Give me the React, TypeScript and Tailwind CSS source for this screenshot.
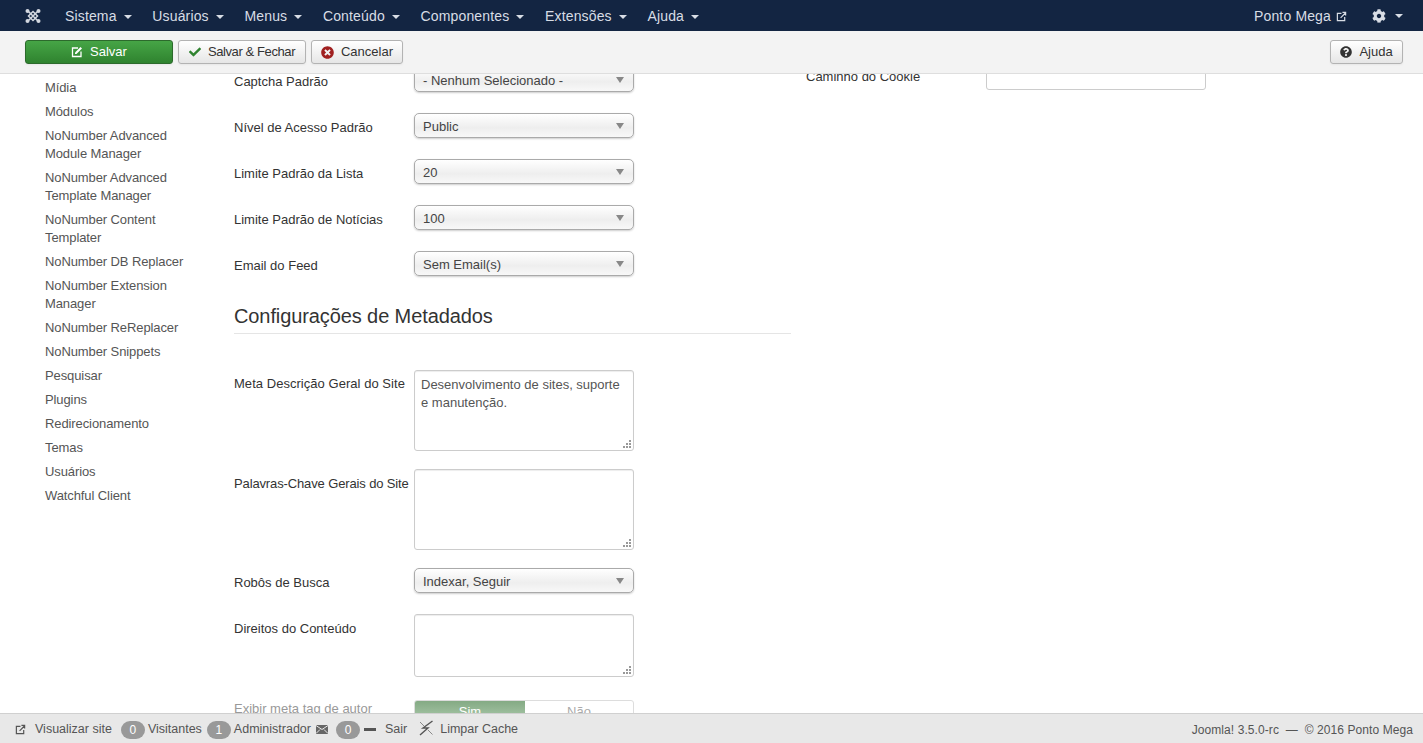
import type { ReactNode } from "react";
import { FaCheck, FaCog, FaQuestionCircle, FaTimesCircle } from "react-icons/fa";

const NAV_ITEMS = ["Sistema", "Usuários", "Menus", "Conteúdo", "Componentes", "Extensões", "Ajuda"];

const SIDEBAR_ITEMS = [
  ["Mídia"],
  ["Módulos"],
  ["NoNumber Advanced", "Module Manager"],
  ["NoNumber Advanced", "Template Manager"],
  ["NoNumber Content", "Templater"],
  ["NoNumber DB Replacer"],
  ["NoNumber Extension", "Manager"],
  ["NoNumber ReReplacer"],
  ["NoNumber Snippets"],
  ["Pesquisar"],
  ["Plugins"],
  ["Redirecionamento"],
  ["Temas"],
  ["Usuários"],
  ["Watchful Client"],
];

function JoomlaLogo() {
  return (
    <svg viewBox="0 0 16 16" className="h-4 w-4" aria-hidden>
      <g fill="none" stroke="#d3d8e0" strokeWidth="1.5">
        <path d="M3 3 13 13M13 3 3 13" />
        <path d="M8 3.500 12.500 8 8 12.500 3.500 8z" />
      </g>
      <circle cx="2.500" cy="3" r="2" fill="#d3d8e0" />
      <circle cx="13.500" cy="3" r="2" fill="#d3d8e0" />
      <circle cx="2.500" cy="13" r="2" fill="#d3d8e0" />
      <circle cx="13.500" cy="13" r="2" fill="#d3d8e0" />
    </svg>
  );
}

function NewTabIcon({ className }: { className: string }) {
  return (
    <svg viewBox="0 0 12 12" className={className} aria-hidden>
      <path
        fill="none"
        stroke="currentColor"
        strokeWidth="1.3"
        d="M6 2.500H1.500v8h8V6.500M5 7.500 10 2.500M7 1.500h3.500V5"
      />
    </svg>
  );
}

function EditIcon() {
  return (
    <svg viewBox="0 0 12 12" className="h-3 w-3" aria-hidden>
      <path fill="none" stroke="currentColor" strokeWidth="1.3" d="M7 2H1.500v8.500H10V5.500" />
      <path fill="currentColor" d="M4 6.500 9.500 1 11 2.500 5.500 8H4z" />
    </svg>
  );
}

function Caret({ className = "ml-[7px]" }: { className?: string }) {
  return <span className={`inline-block border-x-4 border-t-4 border-x-transparent border-t-current align-middle ${className}`} />;
}

function SelectBox({ value }: { value: string }) {
  return (
    <div className="flex h-[25px] w-[220px] shrink-0 items-center justify-between rounded-[5px] border border-[#aaa] bg-gradient-to-b from-white via-[#eeeeee] via-60% to-[#f8f8f8] pl-2 pr-[9px] pt-[2px] text-[#444] shadow-[0_1px_2px_rgba(0,0,0,0.2)]">
      <span>{value}</span>
      <span className="-mt-[2px] border-x-[4px] border-t-[6px] border-x-transparent border-t-[#888]" />
    </div>
  );
}

function FormRow({
  label,
  children,
  className,
  labelClass = "pt-[6px]",
}: {
  label: string;
  children: ReactNode;
  className?: string;
  labelClass?: string;
}) {
  return (
    <div className={`flex ${className ?? ""}`}>
      <label className={`w-[180px] shrink-0 leading-[18px] text-[#333] ${labelClass}`}>{label}</label>
      {children}
    </div>
  );
}

function TextArea({ value, className }: { value?: string; className: string }) {
  return (
    <div className={`relative w-[220px] shrink-0 rounded-[3px] border border-[#ccc] px-[6px] pb-1 pt-[5px] leading-[18px] text-[#555] shadow-[inset_0_1px_1px_rgba(0,0,0,0.075)] ${className}`}>
      {value}
      <svg viewBox="0 0 8 8" className="absolute bottom-[2px] right-[2px] h-2 w-2" aria-hidden>
        <path fill="#999" d="M6 0h2v2H6zM3 3h2v2H3zM6 3h2v2H6zM0 6h2v2H0zM3 6h2v2H3zM6 6h2v2H6z" />
      </svg>
    </div>
  );
}

function ToolbarButton({ children, className }: { children: ReactNode; className: string }) {
  return (
    <button className={`flex h-6 items-center justify-center gap-[7px] rounded-[3px] border border-[#b3b3b3] bg-gradient-to-b from-white to-[#e6e6e6] text-[#333] shadow-[0_1px_2px_rgba(0,0,0,0.05)] ${className}`}>
      {children}
    </button>
  );
}

function CountBadge({ value }: { value: string }) {
  return (
    <span className="flex h-[18px] w-[24px] items-center justify-center rounded-full bg-[#999] text-[12px] font-normal text-white">
      {value}
    </span>
  );
}

export default function App() {
  return (
    <div className="flex h-[743px] flex-col overflow-hidden bg-white font-['Liberation_Sans',Arial,sans-serif] text-[13px]">
      <header className="flex h-[31px] shrink-0 items-center justify-between bg-[#132542] pl-[25px] pr-5 text-[14px] tracking-[0.15px] text-[#d8dde5]">
        <div className="flex items-center">
          <JoomlaLogo />
          <nav className="ml-6 flex items-center gap-[20.7px] pt-px">
            {NAV_ITEMS.map((item) => (
              <span key={item}>
                {item}
                <Caret />
              </span>
            ))}
          </nav>
        </div>
        <div className="flex items-center pt-px">
          <span>Ponto Mega</span>
          <NewTabIcon className="ml-[5px] h-[11px] w-[11px]" />
          <FaCog className="ml-[25px] h-[14px] w-[14px]" />
          <Caret className="ml-[9px]" />
        </div>
      </header>

      <div className="flex h-[43px] shrink-0 items-center justify-between border-b border-[#dedede] bg-[#f3f3f3] pl-[25px] pr-5">
        <div className="flex gap-[5px]">
          <button className="flex h-6 w-[148px] items-center justify-center gap-[7px] rounded-[3px] border border-[#2c6a2c] bg-gradient-to-b from-[#46a546] to-[#2f832f] text-white shadow-[0_1px_2px_rgba(0,0,0,0.05)]">
            <EditIcon />
            <span>Salvar</span>
          </button>
          <ToolbarButton className="w-[128px]">
            <FaCheck className="h-3 w-3 text-[#2f832f]" />
            <span className="tracking-[-0.4px]">Salvar &amp; Fechar</span>
          </ToolbarButton>
          <ToolbarButton className="w-[92px]">
            <FaTimesCircle className="h-[13px] w-[13px] text-[#a02020]" />
            <span>Cancelar</span>
          </ToolbarButton>
        </div>
        <ToolbarButton className="w-[73px]">
          <FaQuestionCircle className="h-3 w-3" />
          <span>Ajuda</span>
        </ToolbarButton>
      </div>

      <main className="flex min-h-0 flex-1 overflow-hidden">
        <ul className="w-[234px] shrink-0 pl-[45px] pt-[2px] leading-[18px] tracking-[-0.1px] text-[#555]">
          {SIDEBAR_ITEMS.map((lines) => (
            <li key={lines.join(" ")} className="py-[3px]">
              {lines.map((line) => (
                <div key={line}>{line}</div>
              ))}
            </li>
          ))}
        </ul>

        <section className="w-[557px] shrink-0">
          <div className="-mt-[7px]">
            <FormRow label="Captcha Padrão" className="mb-[21px]">
              <SelectBox value="- Nenhum Selecionado -" />
            </FormRow>
            <FormRow label="Nível de Acesso Padrão" className="mb-[21px]">
              <SelectBox value="Public" />
            </FormRow>
            <FormRow label="Limite Padrão da Lista" className="mb-[21px]">
              <SelectBox value="20" />
            </FormRow>
            <FormRow label="Limite Padrão de Notícias" className="mb-[21px]">
              <SelectBox value="100" />
            </FormRow>
            <FormRow label="Email do Feed" className="mb-7">
              <SelectBox value="Sem Email(s)" />
            </FormRow>
            <h2 className="mb-9 border-b border-[#e5e5e5] pb-1 text-[20px] leading-[25px] tracking-[-0.1px] text-[#333]">
              Configurações de Metadados
            </h2>
            <FormRow label="Meta Descrição Geral do Site" className="mb-[18px]" labelClass="pt-[5px] tracking-[0.04px]">
              <TextArea value="Desenvolvimento de sites, suporte e manutenção." className="h-[81px]" />
            </FormRow>
            <FormRow label="Palavras-Chave Gerais do Site" className="mb-[18px]" labelClass="pt-[6px] tracking-[-0.13px]">
              <TextArea className="h-[81px]" />
            </FormRow>
            <FormRow label="Robôs de Busca" className="mb-[21px]">
              <SelectBox value="Indexar, Seguir" />
            </FormRow>
            <FormRow label="Direitos do Conteúdo" className="mb-[23px]">
              <TextArea className="h-[63px]" />
            </FormRow>
            <div className="flex">
              <span className="w-[180px] shrink-0 leading-[18px] text-[#999]">Exibir meta tag de autor</span>
              <div className="flex h-[26px] w-[220px] shrink-0 overflow-hidden rounded-[3px] border border-[#ddd] text-center leading-[22px]">
                <span className="w-[110px] bg-gradient-to-b from-[#84aa84] to-[#b4d0b4] text-white">Sim</span>
                <span className="flex-1 text-[#aaa]">Não</span>
              </div>
            </div>
          </div>
        </section>

        <section className="ml-[15px] flex h-4 items-end">
          <label className="mb-1 w-[180px] leading-[18px] text-[#333]">Caminho do Cookie</label>
          <div className="h-[30px] w-[220px] shrink-0 rounded-[3px] border border-[#ccc]" />
        </section>
      </main>

      <footer className="flex h-[30px] shrink-0 items-center justify-between border-t border-[#d0d0d0] bg-[#e8e8e8] pl-[15px] pr-[10px] pt-[2px] text-[12.5px] text-[#555]">
        <div className="flex items-center">
          <NewTabIcon className="h-[11px] w-[11px]" />
          <span className="ml-[9px]">Visualizar site</span>
          <span className="ml-[9px]"><CountBadge value="0" /></span>
          <span className="ml-[3px]">Visitantes</span>
          <span className="ml-[5px]"><CountBadge value="1" /></span>
          <span className="ml-[3px]">Administrador</span>
          <svg viewBox="0 0 12 9" className="ml-[5px] h-[9px] w-3" aria-hidden>
            <path fill="#666" d="M0 0h12v9H0z" />
            <path fill="none" stroke="#e8e8e8" d="m0 .5 6 4 6-4M0 8.500l4-4M12 8.500l-4-4" />
          </svg>
          <span className="ml-2"><CountBadge value="0" /></span>
          <span className="ml-1 h-[3px] w-3 bg-[#555]" />
          <span className="ml-[9px]">Sair</span>
          <svg viewBox="0 0 16 16" className="ml-[11px] -mt-[4px] h-4 w-4" aria-hidden>
            <path fill="none" stroke="#555" strokeWidth="1.4" d="M14.500 1 5 8h5l-8 7" />
            <path fill="none" stroke="#888" strokeWidth="1" d="M2 2l4 4M10 10l4.500 4.500" />
          </svg>
          <span className="ml-[6px]">Limpar Cache</span>
        </div>
        <span className="text-[12px] tracking-[0.08px]">Joomla! 3.5.0-rc &nbsp;—&nbsp; © 2016 Ponto Mega</span>
      </footer>
    </div>
  );
}
